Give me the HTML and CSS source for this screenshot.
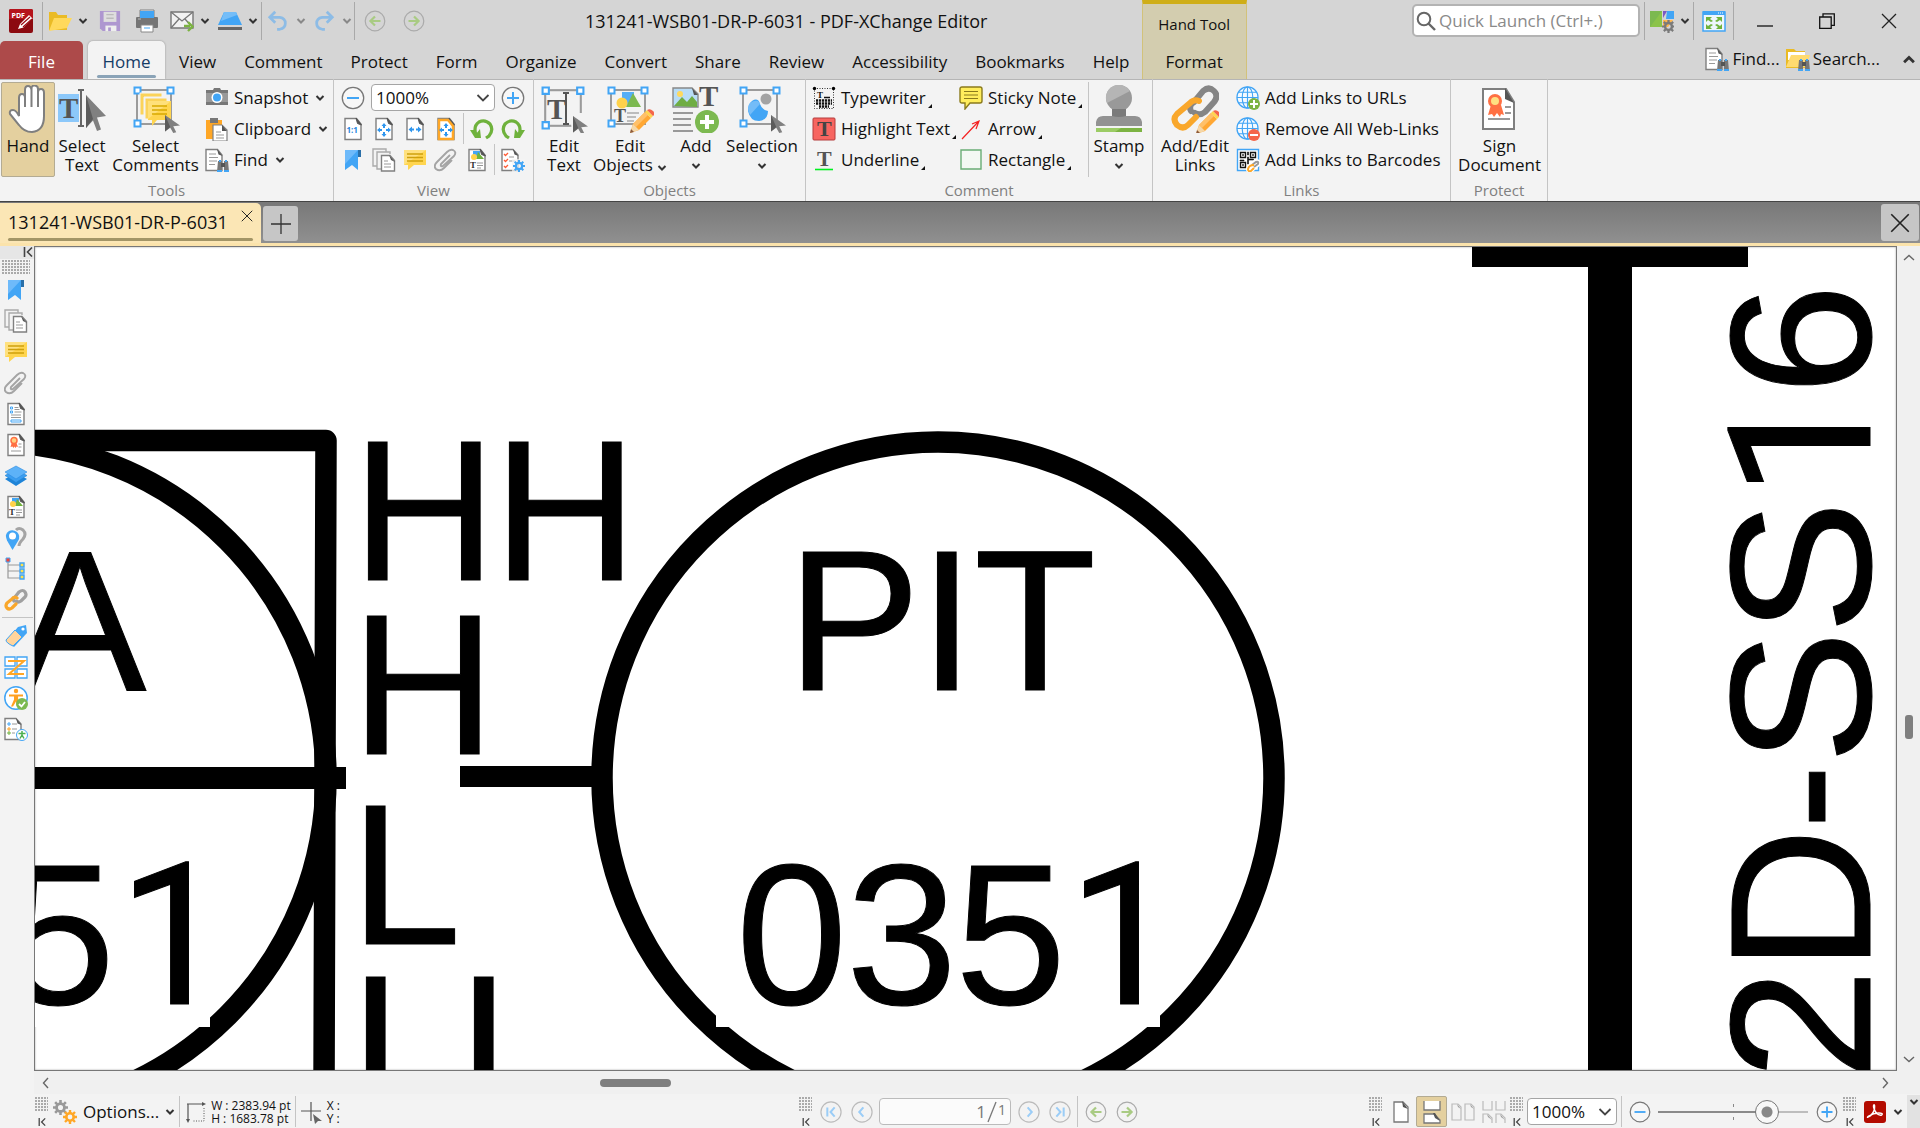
FILE: index.html
```html
<!DOCTYPE html>
<html lang="en">
<head>
<meta charset="utf-8">
<title>131241-WSB01-DR-P-6031 - PDF-XChange Editor</title>
<link rel="stylesheet" href="styles.css">
</head>
<body>
<svg class="sprite" aria-hidden="true">
  <symbol id="chev" viewBox="0 0 10 6"><path d="M1.5 1l3.5 3.5L8.5 1" fill="none" stroke="currentColor" stroke-width="2"/></symbol>
  <symbol id="chev-lg" viewBox="0 0 14 8"><path d="M1.500 1l5.500 5.500L12.500 1" fill="none" stroke="currentColor" stroke-width="1.800"/></symbol>
  <symbol id="caret" viewBox="0 0 14 14"><path d="M9 2L4.500 7 9 12" fill="none" stroke="#666" stroke-width="1.400"/></symbol>
  <symbol id="collapse" viewBox="0 0 10 10"><path d="M1.500 0v10M9 .5L4.500 5 9 9.500" fill="none" stroke="#444" stroke-width="1.600"/></symbol>
  <symbol id="corner" viewBox="0 0 4 4"><path d="M4 0v4H0z" fill="#111"/></symbol>

  <symbol id="app" viewBox="0 0 24 24"><rect width="24" height="24" rx="2" fill="#8c0a10"/><path d="M2 0h20q2 0 2 2v8H0V2q0-2 2-2z" fill="#b5131b"/><path d="M9 20l2-5 9-9 3.500 3.500-9 9z" fill="#fff"/><path d="M12 16l9-8M14 18l9-8" stroke="#9a0d14" stroke-width="1.200"/><text x="2.500" y="8.500" class="tiny-bold" fill="#fff">PDF</text></symbol>
  <symbol id="folder" viewBox="0 0 24 24"><path d="M1 3h7l2 3h9v15H1z" fill="#eabb25"/><path d="M6 9h18l-5 10-18 3z" fill="#ffd95c"/></symbol>
  <symbol id="save" viewBox="0 0 24 24"><path d="M1 1h22v22H4l-3-3z" fill="#ae97d0"/><path d="M5 2h14v11H5z" fill="#dedede"/><path d="M8 5h8M8 9h8" stroke="#bbb" stroke-width="1.500"/><path d="M7 17h12v6H7z" fill="#eee"/><path d="M10 19h3v4h-3z" fill="#ae97d0"/></symbol>
  <symbol id="print" viewBox="0 0 24 24"><path d="M5 1h14v8H5z" fill="#dcebf8" stroke="#808080"/><rect x="1" y="8" width="22" height="11" rx="1" fill="#757575"/><path d="M5 2h14v7H5z" fill="#42a5f5"/><path d="M3 10h3" stroke="#bbb"/><path d="M6 16h12v7H6z" fill="#fff" stroke="#888"/><path d="M9 19h6" stroke="#42a5f5"/></symbol>
  <symbol id="mail" viewBox="0 0 24 24"><path d="M1 3h22v16H1z" fill="#f2f2f2" stroke="#777" stroke-width="1.400"/><path d="M1 3l11 9L23 3M1 19l8-9M23 19l-8-9" fill="none" stroke="#777" stroke-width="1.300"/><path d="M14 17h6M18 13l4.500 4.500L18 22" fill="none" stroke="#7cb342" stroke-width="2.400"/></symbol>
  <symbol id="scan" viewBox="0 0 24 24"><path d="M6 3h12l6 13H0z" fill="#42a5f5"/><path d="M6 3h12l1 3L3 12z" fill="#74bdf8"/><path d="M0 18h24v3H0z" fill="#666"/></symbol>
  <symbol id="undo" viewBox="0 0 24 24"><path d="M4 8h10q6 1 6 6.500t-6 6.500h-3" fill="none" stroke="#8dbce6" stroke-width="3"/><path d="M9 2L3 8l6 6" fill="none" stroke="#8dbce6" stroke-width="3"/></symbol>
  <symbol id="redo" viewBox="0 0 24 24"><path d="M20 8H10q-6 1-6 6.500T10 21h3" fill="none" stroke="#8dbce6" stroke-width="3"/><path d="M15 2l6 6-6 6" fill="none" stroke="#8dbce6" stroke-width="3"/></symbol>
  <symbol id="back" viewBox="0 0 24 24"><circle cx="12" cy="12" r="10.700" fill="none" stroke="#aaa" stroke-width="1.300"/><path d="M18 12H7M12 7l-5 5 5 5" fill="none" stroke="#a9cb83" stroke-width="2.400"/></symbol>
  <symbol id="fwd" viewBox="0 0 24 24"><circle cx="12" cy="12" r="10.700" fill="none" stroke="#aaa" stroke-width="1.300"/><path d="M6 12h11M12 7l5 5-5 5" fill="none" stroke="#a9cb83" stroke-width="2.400"/></symbol>
  <symbol id="mag" viewBox="0 0 20 20"><circle cx="8" cy="8" r="6.300" fill="none" stroke="#666" stroke-width="2"/><path d="M12.500 12.500L19 19" stroke="#666" stroke-width="2.400"/></symbol>
  <symbol id="ui" viewBox="0 0 24 24"><path d="M0 2h12v16H0z" fill="#7cb950"/><path d="M0 18L12 2v16z" fill="#8bc34a"/><path d="M13 2h4l-4 7z" fill="#7e57c2"/><path d="M17 2h7v8h-8z" fill="#42a5f5"/><path d="M13 11h10l-5 7h-5z" fill="#ffb74d"/><use href="#gear" x="12" y="11" width="13" height="13" color="#7a7a7a"/></symbol>
  <symbol id="full" viewBox="0 0 24 24"><path d="M1 3h22v19H1z" fill="#eef6fd" stroke="#42a5f5" stroke-width="1.500"/><path d="M1 2h22v4H1z" fill="#42a5f5"/><path d="M16 4h6" stroke="#fff" stroke-dasharray="1 1"/><path d="M4 8h6l-2 2 3 2-2 1-3-2-2 2zM20 8h-6l2 2-3 2 2 1 3-2 2 2zM4 20h6l-2-2 3-2-2-1-3 2-2-2zM20 20h-6l2-2-3-2 2-1 3 2 2-2z" fill="#6fb23c"/></symbol>
  <symbol id="min" viewBox="0 0 16 16"><path d="M0 13h16" stroke="#111" stroke-width="1.300"/></symbol>
  <symbol id="restore" viewBox="0 0 16 16"><path d="M.7 4h11.500v11.300H.7zM4 4V.8h11.300v11.500h-3" fill="none" stroke="#111" stroke-width="1.300"/></symbol>
  <symbol id="close" viewBox="0 0 16 16"><path d="M1 1l14 14M15 1L1 15" stroke="#222" stroke-width="1.300"/></symbol>
  <symbol id="plus" viewBox="0 0 20 20"><path d="M10 0v20M0 10h20" stroke="#333" stroke-width="1.300"/></symbol>

  <symbol id="bino" viewBox="0 0 12 12"><path d="M1 1h4v2h2V1h4l1 11H7V7H5v5H0z" fill="#777"/><path d="M0 10h5v2H0zM7 10h5v2H7zM2 0h2v2H2zM8 0h2v2H8z" fill="#42a5f5"/><path d="M4 3h4v4H4z" fill="#555"/></symbol>
  <symbol id="doc" viewBox="0 0 24 24"><path d="M4 1.500h11.500L20 7v15.500H4z" fill="#fff" stroke="#7f7f7f" stroke-width="1.400"/><path d="M15 1l5.500 7-4-1.500z" fill="#555" stroke="#555"/></symbol>
  <symbol id="finddoc" viewBox="0 0 24 24"><path d="M1 1.500h11.500L17 7v15.500H1z" fill="#fff" stroke="#7f7f7f" stroke-width="1.400"/><path d="M12 1l5.500 7-4-1.500z" fill="#555"/><path d="M4 6h7M4 9.500h9M4 13h8M4 16.500h6" stroke="#999" stroke-width="1.200"/><use href="#bino" x="12" y="12" width="12" height="12"/></symbol>
  <symbol id="findfolder" viewBox="0 0 24 24"><path d="M0 2h8l2 2h9v17H0z" fill="#eabb25"/><path d="M2 5h17v8H2z" fill="#fff"/><path d="M5 8h19l-4 12H0z" fill="#ffdb70"/><use href="#bino" x="12" y="12" width="12" height="12"/></symbol>

  <symbol id="cursor" viewBox="0 0 20 24" preserveAspectRatio="none"><path d="M0 0l20 14-9 1 4 8-4 1-4-7-7 5z" fill="#808080"/><path d="M0 0l7 16-7 6z" fill="#5c5c5c"/></symbol>
  <symbol id="frame" viewBox="0 0 42 42"><rect x="4" y="4" width="34" height="34" fill="none" stroke="#9b9b9b" stroke-width="2"/><path d="M1.500 1.500h6v6h-6zM34.500 1.500h6v6h-6zM1.500 34.500h6v6h-6z" fill="#fff" stroke="#42a5f5" stroke-width="2"/></symbol>
  <symbol id="pencil" viewBox="0 0 24 24"><path d="M0 24l3-9L15 3l6 6L9 21z" fill="#ffa733"/><path d="M3 15l12-12 3 3L6 18z" fill="#ffc069"/><path d="M0 24l3-9 6 6z" fill="#f5d7a8"/><path d="M15 3l2-2 6 6-2 2z" fill="#ffd54f"/><path d="M17 1q3-2 6 1t0 5z" fill="#f4664a"/><path d="M0 24l1-4 3 3z" fill="#8b5a3c"/></symbol>

  <symbol id="hand" viewBox="0 0 48 48"><g transform="translate(5 0)"><path d="M10 27V13q0-4 3-4t3 4V5q0-4 3-4t3.500 4V4q0-4 3.500-3.500T29 5v2q0-3 3-3t3 4v23q0 15-12 16Q15 47 10 40L1 29q-1-4 3-4 3 0 6 6z" fill="#fff" stroke="#7f7f7f" stroke-width="2"/><path d="M16 12v10M22.500 5v17M29 7v15" stroke="#7f7f7f" stroke-width="2"/></g></symbol>
  <symbol id="seltext" viewBox="0 0 48 48"><rect y="9" width="21" height="28" fill="#8cc8fa"/><text x="1" y="33" class="serif-lg" fill="#555">T</text><path d="M20 5h6M20 41h6M23 5v36" stroke="#666" stroke-width="2"/><use href="#cursor" x="28" y="10" width="20" height="36"/></symbol>
  <symbol id="selcom" viewBox="0 0 48 48"><use href="#frame" x="1" y="1" width="42" height="42"/><path d="M8 30V8h22v4H12v18zM13 34V13h22v4H17v17z" fill="#fbd35a" stroke="#f3f3f3"/><path d="M16 16h23v19H25l-5 6v-6h-4z" fill="#ffd54f"/><path d="M16 34l23-18H16z" fill="#ffe07a"/><path d="M20 21h15M20 25h15M20 29h15" stroke="#d9a900" stroke-width="1.400"/><use href="#cursor" x="33" y="30" width="15" height="18"/></symbol>
  <symbol id="edittext" viewBox="0 0 48 48"><use href="#frame" x="1" y="1" width="44" height="44"/><text x="7" y="34" class="serif-lg" fill="#555">T</text><path d="M23 8h6M23 39h6M26 8v31" stroke="#555" stroke-width="2"/><path d="M30 28h18v20H32z" fill="#f3f3f3"/><use href="#cursor" x="33" y="31" width="15" height="18"/></symbol>
  <symbol id="editobj" viewBox="0 0 48 48"><use href="#frame" x="1" y="1" width="42" height="42"/><path d="M16 7h12v14H16z" fill="#55aef6"/><path d="M27 8l8 14H20z" fill="#7cb950"/><circle cx="16" cy="18" r="5.500" fill="#ffd24a"/><text x="8" y="37" class="serif-md" fill="#555">T</text><path d="M21 28h12M21 32h9M21 36h7" stroke="#aaa" stroke-width="1.600"/><use href="#pencil" x="24" y="24" width="24" height="24"/></symbol>
  <symbol id="addobj" viewBox="0 0 48 48"><path d="M1 3h19l6 6v13H1z" fill="#b8dcf6" stroke="#888" stroke-width="1.400"/><path d="M2 21l8-9 5 5 5-6 5 6v5z" fill="#6fad43"/><circle cx="8" cy="9" r="3" fill="#ffd95c"/><path d="M20 3l6 7h-4z" fill="#555"/><text x="27" y="21" class="serif-lg" fill="#555">T</text><path d="M1 28h20M1 34h18M1 40h18M1 46h20" stroke="#999" stroke-width="2"/><circle cx="35" cy="37" r="12" fill="#7cb950"/><path d="M35 30v14M28 37h14" stroke="#fff" stroke-width="4"/></symbol>
  <symbol id="selobj" viewBox="0 0 48 48"><use href="#frame" x="1" y="1" width="42" height="42"/><circle cx="28" cy="14" r="5.500" fill="#a3a3a3"/><path d="M14 16q6-4 8 3 2 6 8 7 0 9-9 10-9 0-11-10 0-7 4-10z" fill="#42a5f5"/><path d="M12 18q8-5 10 1l-10 11q-4-8 0-12z" fill="#73bcf8"/><use href="#cursor" x="33" y="30" width="15" height="18"/></symbol>
  <symbol id="stamp" viewBox="0 0 48 48"><circle cx="24" cy="13" r="13" fill="#999"/><path d="M12 18A13 13 0 0 1 35 6z" fill="#b5b5b5"/><path d="M17 24h14v8H17z" fill="#7a7a7a"/><path d="M1 41v-4q1-6 7-6h9q7 2 14 0h9q6 0 7 6v4z" fill="#929292"/><path d="M1 43h46v4H1z" fill="#7cb342"/><path d="M1 43h25l-6 4H1z" fill="#9ccc65"/></symbol>
  <symbol id="addlink" viewBox="0 0 48 48"><g fill="none" stroke-width="6" stroke-linecap="round"><path d="M20 26q-3-6 3-9l9-11q6-5 11 0 5 5 0 11l-9 10q-5 4-10 1" stroke="#858585"/><path d="M28 16q-5-2-9 2L6 29q-5 5 0 11 6 5 11 0l8-8" stroke="#f9a72b"/></g><use href="#pencil" x="25" y="25" width="24" height="24"/></symbol>
  <symbol id="sign" viewBox="0 0 48 48"><path d="M7 4h23l8 13v27H7z" fill="#fff" stroke="#7f7f7f" stroke-width="2"/><path d="M29 3l9 15-9-4z" fill="#555"/><path d="M15 20l-3 10 4-1 2 3 3-4 3 4 1-3 3 1-3-10z" fill="#ff7043"/><circle cx="19" cy="16" r="7" fill="#ff7043"/><circle cx="19" cy="16" r="4" fill="#ffe082"/><path d="M29 22h6M29 28h6M12 34h22" stroke="#999" stroke-width="2"/></symbol>

  <symbol id="camera" viewBox="0 0 24 24"><path d="M1 4h7l1-2h6l1 2h7v15H1z" fill="#777"/><path d="M1 7h22v9H1z" fill="#999"/><circle cx="12" cy="11.500" r="5.500" fill="#fff"/><circle cx="12" cy="11.500" r="4" fill="#42a5f5"/></symbol>
  <symbol id="clip" viewBox="0 0 24 24"><path d="M1 3h16v19H1z" fill="#ffa726"/><path d="M5 1h8v5H5z" fill="#777"/><path d="M8 8h9l5 5v11H8z" fill="#fff" stroke="#808080" stroke-width="1.200"/><path d="M17 8l5 6h-5z" fill="#555"/><path d="M11 15h5M11 18h8M11 21h8" stroke="#999"/></symbol>
  <symbol id="zminus" viewBox="0 0 24 24"><circle cx="12" cy="12" r="10.700" fill="#f7f7f7" stroke="#777" stroke-width="1.300"/><path d="M6 12h12" stroke="#42a5f5" stroke-width="2"/></symbol>
  <symbol id="zplus" viewBox="0 0 24 24"><circle cx="12" cy="12" r="10.700" fill="#f7f7f7" stroke="#777" stroke-width="1.300"/><path d="M6 12h12M12 6v12" stroke="#42a5f5" stroke-width="2"/></symbol>
  <symbol id="one" viewBox="0 0 24 24"><use href="#doc" width="24" height="24"/><text x="5.500" y="16" class="tiny" fill="#1f86e0">1:1</text></symbol>
  <symbol id="arrows4" viewBox="0 0 14 14"><path d="M7 0l2.500 3H8v2H6V3H4.500zM7 14l-2.500-3H6V9h2v2h1.500zM0 7l3-2.500V6h2v2H3v1.500zM14 7l-3 2.500V8H9V6h2V4.500z" fill="#2f96ee"/></symbol>
  <symbol id="fitpage" viewBox="0 0 24 24"><use href="#doc" width="24" height="24"/><use href="#arrows4" x="5" y="6" width="14" height="14"/></symbol>
  <symbol id="fitwidth" viewBox="0 0 24 24"><use href="#doc" width="24" height="24"/><path d="M5.500 12.500l3.500-3v2h2v2H9v2zM18.500 12.500l-3.500-3v2h-2v2h2v2z" fill="#2f96ee"/></symbol>
  <symbol id="fitvis" viewBox="0 0 24 24"><use href="#doc" width="24" height="24"/><path d="M5 3h9l5 6v13H5z" fill="none" stroke="#ffa726" stroke-width="2.500"/><use href="#arrows4" x="5" y="6" width="14" height="14"/></symbol>
  <symbol id="rotl" viewBox="0 0 24 24"><path d="M6 18Q3 9 9 5q6-3 11 2 4 6-1 12l-3 2" fill="none" stroke="#6fb23c" stroke-width="3.200"/><path d="M0 13h4l2 4 4-5 1 9H5z" fill="#6fb23c"/></symbol>
  <symbol id="rotr" viewBox="0 0 24 24"><path d="M18 18q3-9-3-13-6-3-11 2-4 6 1 12l3 2" fill="none" stroke="#6fb23c" stroke-width="3.200"/><path d="M24 13h-4l-2 4-4-5-1 9h6z" fill="#6fb23c"/></symbol>
  <symbol id="bookmark" viewBox="0 0 24 24"><path d="M16 2h4v7h-4z" fill="#2a6fa8"/><path d="M4 2h13v20l-6-5-7 5z" fill="#42a5f5"/><path d="M4 2h13L4 16z" fill="#6ebafa"/></symbol>
  <symbol id="pages" viewBox="0 0 24 24"><path d="M14 4V1H1v17h4M18 6V4H5v17h5" fill="none" stroke="#aaa" stroke-width="1.400"/><path d="M9.500 7.500H18l4.500 5v10.500h-13z" fill="#fff" stroke="#808080" stroke-width="1.400"/><path d="M17 7l6 7-4-2z" fill="#555"/><path d="M12 13h4M12 16h7M12 19h7" stroke="#999" stroke-width="1.200"/></symbol>
  <symbol id="comment" viewBox="0 0 24 24"><path d="M1 2h22v15H11l-6 5v-5H1z" fill="#ffd54f"/><path d="M1 17V2h22z" fill="#ffe17f"/><path d="M4 6h16M4 9.500h16M4 13h16" stroke="#cfa10c" stroke-width="1.300"/></symbol>
  <symbol id="paperclip" viewBox="0 0 24 24"><path d="M16 7L7 16q-1 3 2 2L20 8q3-4-1-6-3-1-6 2L3 14q-4 4-1 7 4 3 8-1l8-8" fill="none" stroke="#a4a4a4" stroke-width="1.900"/></symbol>
  <symbol id="content" viewBox="0 0 24 24"><use href="#doc" width="24" height="24"/><path d="M8 3h7v6H8z" fill="#42a5f5"/><path d="M13 4l6 7h-8z" fill="#6fb23c"/><circle cx="9" cy="9" r="3" fill="#ffd24a"/><text x="5" y="20" class="serif-sm" fill="#333">T</text><path d="M12 15h6M12 17.500h6M12 20h4" stroke="#999" stroke-width="1.200"/></symbol>
  <symbol id="gear" viewBox="0 0 14 14"><path d="M7 0v3M7 11v3M0 7h3M11 7h3M2 2l2 2M10 10l2 2M12 2l-2 2M4 10l-2 2" stroke="currentColor" stroke-width="2.400"/><circle cx="7" cy="7" r="3.700" fill="none" stroke="currentColor" stroke-width="2.600"/></symbol>
  <symbol id="props" viewBox="0 0 24 24"><path d="M1 1.500h11L17 7v15.500H1z" fill="#fff" stroke="#7f7f7f" stroke-width="1.400"/><path d="M12 1l5.500 7-4-1.500z" fill="#555"/><path d="M3 6l1.500 1.500L7 5M3 12l1.500 1.500L7 11M3 18l1.500 1.500L7 17" fill="none" stroke="#ff5c36" stroke-width="1.300"/><path d="M8 9h5M8 13h6" stroke="#999"/><path d="M11 11h13v13H11z" fill="#f3f3f3" opacity=".7"/><use href="#gear" x="12" y="12" width="12" height="12" color="#42a5f5"/></symbol>
  <symbol id="typewriter" viewBox="0 0 24 24"><path d="M2.500 2.500h19v20h-19z" fill="none" stroke="#333" stroke-dasharray="1 1.500"/><circle cx="2.500" cy="2.500" r="1.700"/><circle cx="21.500" cy="2.500" r="1.700"/><text x="5" y="12" class="serif-sm" fill="#111">T</text><path d="M12 11.500h6" stroke="#111" stroke-width="1.500"/><path d="M4 14.500h16M4 17.500h16M7 20.500h10" stroke="#111" stroke-width="2.400" stroke-dasharray="2.200 .8"/></symbol>
  <symbol id="hltext" viewBox="0 0 24 24"><rect x="1" y="1" width="22" height="22" rx="1" fill="#f76560" stroke="#b43c3c"/><text x="5" y="19" class="serif-t" fill="#444">T</text></symbol>
  <symbol id="underline" viewBox="0 0 24 24"><text x="5" y="18" class="serif-t" fill="#555">T</text><path d="M3 21.500h18" stroke="#00f020" stroke-width="1.600"/></symbol>
  <symbol id="sticky" viewBox="0 0 24 24"><path d="M3 1h18q2 0 2 2v12q0 2-2 2H11l-5 6v-6H3q-2 0-2-2V3q0-2 2-2z" fill="#ffed5c" stroke="#8a7a1c" stroke-width="1.400"/><path d="M5 5.500h14M5 9h14M5 12.500h14" stroke="#8a7a1c"/></symbol>
  <symbol id="arrow" viewBox="0 0 24 24"><path d="M3 22L20 4M13 7l7-3-3 8" fill="none" stroke="#f42222" stroke-width="1.200"/></symbol>
  <symbol id="rect" viewBox="0 0 24 24"><path d="M2 2h20v19H2z" fill="#f3f8f3" stroke="#69ad75" stroke-width="1.400"/></symbol>
  <symbol id="globe" viewBox="0 0 24 24"><circle cx="12" cy="12" r="11" fill="#f5faff" stroke="#42a5f5" stroke-width="1.300"/><path d="M12 1v22M1 12h22M3 6.500h18M3 17.500h18" stroke="#42a5f5" stroke-width="1.200"/><ellipse cx="12" cy="12" rx="5.500" ry="11" fill="none" stroke="#42a5f5" stroke-width="1.200"/></symbol>
  <symbol id="urladd" viewBox="0 0 24 24"><use href="#globe" width="23" height="23"/><circle cx="18" cy="18" r="6" fill="#7cb342"/><path d="M18 14v8M14 18h8" stroke="#fff" stroke-width="2"/></symbol>
  <symbol id="urldel" viewBox="0 0 24 24"><use href="#globe" width="23" height="23"/><circle cx="18" cy="18" r="6" fill="#f4664a"/><path d="M14 18h8" stroke="#fff" stroke-width="2"/></symbol>
  <symbol id="qr" viewBox="0 0 24 24"><path d="M1.500 1.500h21v21h-21z" fill="#fff" stroke="#42a5f5" stroke-width="1.400"/><path d="M4.500 4.500h5v5h-5zM14.500 4.500h5v5h-5zM4.500 14.500h5v5h-5z" fill="none" stroke="#111" stroke-width="1.400"/><path d="M6.500 6.500h1v1h-1zM16.500 6.500h1v1h-1zM6.500 16.500h1v1h-1zM11.500 4h1v3h-1zM11.500 9h1v2h5v1h-5v4h-1zM4 12h4v1H4z" fill="#111" stroke="#111" stroke-width=".6"/><path d="M18 19l4-3q1-3-2-2l-4 3" fill="none" stroke="#fff" stroke-width="5"/><path d="M18 17q-5 0-6 4 0 3 3 2l3-3" fill="none" stroke="#fff" stroke-width="4"/><path d="M18 19l4-3q1-3-2-2l-4 3" fill="none" stroke="#999" stroke-width="2"/><path d="M18 17q-5 0-6 4 0 3 3 2l3-3" fill="none" stroke="#ffa726" stroke-width="2"/></symbol>

  <symbol id="fields" viewBox="0 0 24 24"><use href="#doc" width="24" height="24"/><path d="M6.500 5h2v2h-2zM6.500 9h2v2h-2zM7 18h10v2H7z" fill="none" stroke="#42a5f5"/><path d="M10.500 5.500h4M10.500 7.500h5M10.500 10h7M7 13h10M7 15.500h10" stroke="#999"/></symbol>
  <symbol id="sigs" viewBox="0 0 24 24"><use href="#doc" width="24" height="24"/><path d="M8 9l-1.500 5 2-.5 1 1.500 1-1.500 1 1.500 1-1.500 1.500.5L12 9z" fill="#ff7043"/><circle cx="10" cy="7.500" r="3" fill="#ffd180" stroke="#ff7043" stroke-width="1.500"/><path d="M14.500 11h3M14.500 14h3M7 18h10" stroke="#999"/></symbol>
  <symbol id="layers" viewBox="0 0 24 24"><path d="M1 15l11-6 11 6-11 7z" fill="#1e84d8"/><path d="M1 11.500l11-6 11 6-11 7z" fill="#3a9df0" stroke="#2583cf" stroke-width=".6"/><path d="M1 8l11-6 11 6-11 7z" fill="#5db2f8" stroke="#2b8be0" stroke-width=".6"/></symbol>
  <symbol id="dest" viewBox="0 0 24 24"><path d="M15 20q0-3 4-7 4-5 0-9-4-3-7 0" fill="none" stroke="#a4a4a4" stroke-width="3"/><path d="M8.500 24L3 14.500Q0 8 5 5q4-2 8 1 4 4 1 9z" fill="#42a5f5"/><circle cx="8.500" cy="10" r="3.500" fill="#fff"/></symbol>
  <symbol id="tree" viewBox="0 0 24 24"><path d="M4 4v17h14M4 8h14M4 14h14" fill="none" stroke="#999" stroke-width="1.200"/><path d="M2 1h4v4H2z" fill="#f44336" stroke="#42a5f5"/><path d="M16 6h4v4h-4zM16 12h4v4h-4zM16 18h4v4h-4z" fill="#ffe14a" stroke="#42a5f5" stroke-width="1.400"/></symbol>
  <symbol id="links" viewBox="0 0 24 24"><g fill="none" stroke-width="3.200" stroke-linecap="round"><path d="M10 13q-2-3 1-4l4-5q4-3 6 0t0 5l-4 4q-3 2-5 0" stroke="#a0a0a0"/><path d="M13 10q-3-2-5 1l-5 4q-2 3 0 5t5 0l4-4" stroke="#f9a72b"/></g></symbol>
  <symbol id="tag" viewBox="0 0 24 24"><path d="M2 17L14 3l8-2 1 8L10 23z" fill="#42a5f5"/><path d="M2 16L11 6l7 7-9 9q-7-3-7-6z" fill="#ffd49c" stroke="#42a5f5"/><circle cx="19" cy="5" r="1.600" fill="#fff"/></symbol>
  <symbol id="order" viewBox="0 0 24 24"><path d="M1 2h10v9H1zM13 2h10v9H13zM1 14h10v9H1zM13 14h10v9H13z" fill="#fff" stroke="#42a5f5" stroke-width="1.300"/><path d="M4 6h16L5 19h15" fill="none" stroke="#ffa726" stroke-width="2"/></symbol>
  <symbol id="access" viewBox="0 0 24 24"><circle cx="12" cy="12" r="11.200" fill="#fff" stroke="#42a5f5" stroke-width="1.500"/><circle cx="12" cy="5" r="2.200" fill="#ffa020"/><path d="M5 8.500h14v2h-5l1 10h-2l-1-5-3 5H7l3-7v-3H5z" fill="#ffa020"/><circle cx="18" cy="18" r="6" fill="#7cb950"/><path d="M15 18l2.500 2.500L21 16" fill="none" stroke="#fff" stroke-width="1.800"/></symbol>
  <symbol id="report" viewBox="0 0 24 24"><path d="M1 1.500h11L17 7v15.500H1z" fill="#fff" stroke="#7f7f7f" stroke-width="1.400"/><path d="M12 1l5.500 7-4-1.500z" fill="#555"/><path d="M4 6h2v2H4z" fill="none" stroke="#42a5f5"/><path d="M4 11h2v2H4z" fill="none" stroke="#ffa020"/><path d="M4 15h2v2H4z" fill="none" stroke="#6fb23c"/><path d="M8 7h5M8 12h5M8 16h3" stroke="#999"/><circle cx="18" cy="18" r="5.500" fill="#fff" stroke="#42a5f5"/><path d="M14.500 16.500h7M18 14v4M18 18l-2 3.500M18 18l2 3.500" stroke="#4caf50" stroke-width="1.500"/></symbol>

  <symbol id="first" viewBox="0 0 24 24"><circle cx="12" cy="12" r="11" fill="none" stroke="#bbb" stroke-width="1.300"/><path d="M8 7v10M16 7l-4.500 5 4.500 5" fill="none" stroke="#9bcdf7" stroke-width="2.200"/></symbol>
  <symbol id="prev" viewBox="0 0 24 24"><circle cx="12" cy="12" r="11" fill="none" stroke="#bbb" stroke-width="1.300"/><path d="M13.500 7L9 12l4.500 5" fill="none" stroke="#9bcdf7" stroke-width="2.200"/></symbol>
  <symbol id="next" viewBox="0 0 24 24"><circle cx="12" cy="12" r="11" fill="none" stroke="#bbb" stroke-width="1.300"/><path d="M10.500 7l4.500 5-4.500 5" fill="none" stroke="#9bcdf7" stroke-width="2.200"/></symbol>
  <symbol id="last" viewBox="0 0 24 24"><circle cx="12" cy="12" r="11" fill="none" stroke="#bbb" stroke-width="1.300"/><path d="M16 7v10M8 7l4.500 5L8 17" fill="none" stroke="#9bcdf7" stroke-width="2.200"/></symbol>
  <symbol id="gears" viewBox="0 0 24 24"><use href="#gear" x="0" y="0" width="15" height="15" color="#999"/><use href="#gear" x="10" y="10" width="14" height="14" color="#ffa726"/></symbol>
  <symbol id="size" viewBox="0 0 24 24"><path d="M3 4h16M4 4v17" stroke="#555" stroke-width="1.200"/><path d="M18 2l4 2-4 2zM2 19h4l-2 4z" fill="#555"/><path d="M20 8v13H8" fill="none" stroke="#555" stroke-dasharray="1 1.500"/></symbol>
  <symbol id="cross" viewBox="0 0 24 24"><path d="M11 2v19M1 11h20" stroke="#555" stroke-width="1.200"/><path d="M13 14l9 7h-4l-3 3z" fill="#666"/></symbol>
  <symbol id="single" viewBox="0 0 24 24"><path d="M5 2h9l5 5v15H5z" fill="#fff" stroke="#777" stroke-width="1.300"/><path d="M13 1l6 8-5-2z" fill="#555"/></symbol>
  <symbol id="cont" viewBox="0 0 24 24"><path d="M4 1v9h16V1M4 23v-9h10l6 6v3z" fill="#fff" stroke="#777" stroke-width="1.300"/><path d="M13 13h2l5 8-5-3z" fill="#555"/></symbol>
  <symbol id="two" viewBox="0 0 24 24"><path d="M1 4h6l3 3v13H1zM14 4h6l3 3v13h-9z" fill="none" stroke="#bbb" stroke-width="1.200"/><path d="M6 4l4 5-3-2zM19 4l4 5-3-2z" fill="#999"/></symbol>
  <symbol id="four" viewBox="0 0 24 24"><path d="M1 1v9h9V1M14 1v9h9V1M1 23v-9h5l4 4v5M14 23v-9h5l4 4v5" fill="none" stroke="#bbb" stroke-width="1.200"/><path d="M5 14l5 6-4-3zM18 14l5 6-4-3z" fill="#999"/></symbol>
  <symbol id="pdf" viewBox="0 0 24 24"><rect x="1" y="1" width="22" height="22" rx="3" fill="#b30b00"/><path d="M5 17q5-2 6.500-8 .5-5-.8-4-1 2 2 7 3 4 6 3 2-2-3-2-5 0-10 3-2 2-.7 1z" fill="none" stroke="#fff" stroke-width="1.400"/></symbol>
</svg>

<div class="app">
  <header class="head">
    <div class="quickbar">
      <span class="logo"><svg class="i24"><use href="#app"/></svg></span>
      <i class="sep"></i>
      <button class="split" aria-label="Open"><svg class="i24"><use href="#folder"/></svg><svg class="chev"><use href="#chev"/></svg></button>
      <button class="tool" aria-label="Save"><svg class="i22"><use href="#save"/></svg></button>
      <button class="tool" aria-label="Print"><svg class="i24"><use href="#print"/></svg></button>
      <button class="split" aria-label="E-mail"><svg class="i24"><use href="#mail"/></svg><svg class="chev"><use href="#chev"/></svg></button>
      <button class="split" aria-label="Scan"><svg class="i24"><use href="#scan"/></svg><svg class="chev"><use href="#chev"/></svg></button>
      <i class="sep"></i>
      <button class="split dim" aria-label="Undo"><svg class="i22"><use href="#undo"/></svg><svg class="chev"><use href="#chev"/></svg></button>
      <button class="split dim" aria-label="Redo"><svg class="i22"><use href="#redo"/></svg><svg class="chev"><use href="#chev"/></svg></button>
      <i class="sep"></i>
      <button class="tool wide" aria-label="Previous view"><svg class="i22"><use href="#back"/></svg></button>
      <button class="tool wide" aria-label="Next view"><svg class="i22"><use href="#fwd"/></svg></button>
      <h1 class="title">131241-WSB01-DR-P-6031 - PDF-XChange Editor</h1>
    </div>
    <div class="ctx-head">Hand Tool</div>
    <div class="winbar">
      <label class="search"><svg class="i20"><use href="#mag"/></svg><input type="search" aria-label="Quick Launch" placeholder="Quick Launch (Ctrl+.)"></label>
      <i class="sep"></i>
      <button class="split" aria-label="UI options"><svg class="i24"><use href="#ui"/></svg><svg class="chev"><use href="#chev"/></svg></button>
      <i class="sep"></i>
      <button class="tool wide" aria-label="Full screen"><svg class="i24"><use href="#full"/></svg></button>
      <i class="sep"></i>
      <button class="win" aria-label="Minimize"><svg class="i16"><use href="#min"/></svg></button>
      <button class="win" aria-label="Restore"><svg class="i16"><use href="#restore"/></svg></button>
      <button class="win" aria-label="Close"><svg class="i16"><use href="#close"/></svg></button>
    </div>
    <nav class="tabs">
      <button class="tab file">File</button>
      <button class="tab active">Home</button>
      <button class="tab">View</button>
      <button class="tab">Comment</button>
      <button class="tab">Protect</button>
      <button class="tab">Form</button>
      <button class="tab">Organize</button>
      <button class="tab">Convert</button>
      <button class="tab">Share</button>
      <button class="tab">Review</button>
      <button class="tab">Accessibility</button>
      <button class="tab">Bookmarks</button>
      <button class="tab">Help</button>
    </nav>
    <button class="tab ctx-tab">Format</button>
    <div class="finders">
      <button class="finder"><svg class="i24"><use href="#finddoc"/></svg>Find...</button>
      <button class="finder"><svg class="i24"><use href="#findfolder"/></svg>Search...</button>
      <button class="fold" aria-label="Collapse ribbon"><svg class="chev-fold"><use href="#chev"/></svg></button>
    </div>
  </header>

  <section class="ribbon">
    <div class="group g-tools">
      <div class="body">
        <button class="big on w54"><svg class="i48"><use href="#hand"/></svg><span>Hand</span></button>
        <button class="big w54"><svg class="i48"><use href="#seltext"/></svg><span>Select<br>Text</span></button>
        <button class="big w93"><svg class="i48"><use href="#selcom"/></svg><span>Select<br>Comments</span></button>
        <div class="stack">
          <button class="row"><svg class="i24"><use href="#camera"/></svg>Snapshot<svg class="chev"><use href="#chev"/></svg></button>
          <button class="row"><svg class="i24"><use href="#clip"/></svg>Clipboard<svg class="chev"><use href="#chev"/></svg></button>
          <button class="row"><svg class="i24"><use href="#finddoc"/></svg>Find<svg class="chev"><use href="#chev"/></svg></button>
        </div>
      </div>
      <div class="name">Tools</div>
    </div>
    <div class="group g-view">
      <div class="body">
        <div class="stack">
          <div class="line">
            <button class="ib" aria-label="Zoom out"><svg class="i24"><use href="#zminus"/></svg></button>
            <span class="combo"><select aria-label="Zoom"><option>1000%</option></select><svg class="chev-lg"><use href="#chev-lg"/></svg></span>
            <button class="ib" aria-label="Zoom in"><svg class="i24"><use href="#zplus"/></svg></button>
          </div>
          <div class="line">
            <button class="ib" aria-label="Actual size"><svg class="i24"><use href="#one"/></svg></button>
            <button class="ib" aria-label="Fit page"><svg class="i24"><use href="#fitpage"/></svg></button>
            <button class="ib" aria-label="Fit width"><svg class="i24"><use href="#fitwidth"/></svg></button>
            <button class="ib" aria-label="Fit visible"><svg class="i24"><use href="#fitvis"/></svg></button>
            <i class="vsep"></i>
            <button class="ib" aria-label="Rotate left"><svg class="i24"><use href="#rotl"/></svg></button>
            <button class="ib" aria-label="Rotate right"><svg class="i24"><use href="#rotr"/></svg></button>
          </div>
          <div class="line">
            <button class="ib" aria-label="Bookmarks"><svg class="i24"><use href="#bookmark"/></svg></button>
            <button class="ib" aria-label="Thumbnails"><svg class="i24"><use href="#pages"/></svg></button>
            <button class="ib" aria-label="Comments"><svg class="i24"><use href="#comment"/></svg></button>
            <button class="ib" aria-label="Attachments"><svg class="i24"><use href="#paperclip"/></svg></button>
            <button class="ib" aria-label="Content"><svg class="i24"><use href="#content"/></svg></button>
            <i class="vsep"></i>
            <button class="ib" aria-label="Properties"><svg class="i24"><use href="#props"/></svg></button>
          </div>
        </div>
      </div>
      <div class="name">View</div>
    </div>
    <div class="group g-objects">
      <div class="body">
        <button class="big w56"><svg class="i48"><use href="#edittext"/></svg><span>Edit<br>Text</span></button>
        <button class="big w76"><svg class="i48"><use href="#editobj"/></svg><span>Edit<br>Objects<svg class="chev"><use href="#chev"/></svg></span></button>
        <button class="big w56"><svg class="i48"><use href="#addobj"/></svg><span>Add</span><svg class="chev"><use href="#chev"/></svg></button>
        <button class="big w76"><svg class="i48"><use href="#selobj"/></svg><span>Selection</span><svg class="chev"><use href="#chev"/></svg></button>
      </div>
      <div class="name">Objects</div>
    </div>
    <div class="group g-comment">
      <div class="body">
        <div class="stack col-a">
          <button class="row"><svg class="i24"><use href="#typewriter"/></svg>Typewriter<svg class="corner"><use href="#corner"/></svg></button>
          <button class="row"><svg class="i24"><use href="#hltext"/></svg>Highlight Text<svg class="corner"><use href="#corner"/></svg></button>
          <button class="row"><svg class="i24"><use href="#underline"/></svg>Underline<svg class="corner"><use href="#corner"/></svg></button>
        </div>
        <div class="stack col-b">
          <button class="row"><svg class="i24"><use href="#sticky"/></svg>Sticky Note<svg class="corner"><use href="#corner"/></svg></button>
          <button class="row"><svg class="i24"><use href="#arrow"/></svg>Arrow<svg class="corner"><use href="#corner"/></svg></button>
          <button class="row"><svg class="i24"><use href="#rect"/></svg>Rectangle<svg class="corner"><use href="#corner"/></svg></button>
        </div>
        <i class="vsep"></i>
        <button class="big w60"><svg class="i48"><use href="#stamp"/></svg><span>Stamp</span><svg class="chev"><use href="#chev"/></svg></button>
      </div>
      <div class="name">Comment</div>
    </div>
    <div class="group g-links">
      <div class="body">
        <button class="big w76"><svg class="i48"><use href="#addlink"/></svg><span>Add/Edit<br>Links</span></button>
        <div class="stack">
          <button class="row"><svg class="i24"><use href="#urladd"/></svg>Add Links to URLs</button>
          <button class="row"><svg class="i24"><use href="#urldel"/></svg>Remove All Web-Links</button>
          <button class="row"><svg class="i24"><use href="#qr"/></svg>Add Links to Barcodes</button>
        </div>
      </div>
      <div class="name">Links</div>
    </div>
    <div class="group g-protect">
      <div class="body">
        <button class="big w93"><svg class="i48"><use href="#sign"/></svg><span>Sign<br>Document</span></button>
      </div>
      <div class="name">Protect</div>
    </div>
  </section>

  <div class="doctabs">
    <div class="doctab"><span>131241-WSB01-DR-P-6031</span><button class="x" aria-label="Close document"><svg class="i12"><use href="#close"/></svg></button></div>
    <button class="newtab" aria-label="New tab"><svg class="i20"><use href="#plus"/></svg></button>
    <button class="closeall" aria-label="Close all"><svg class="i20"><use href="#close"/></svg></button>
  </div>

  <main class="work">
    <aside class="side">
      <button class="sidefold" aria-label="Collapse pane"><svg class="i10"><use href="#collapse"/></svg></button>
      <i class="grip"></i>
      <button class="sb" aria-label="Bookmarks"><svg class="i24"><use href="#bookmark"/></svg></button>
      <button class="sb" aria-label="Thumbnails"><svg class="i24"><use href="#pages"/></svg></button>
      <button class="sb" aria-label="Comments"><svg class="i24"><use href="#comment"/></svg></button>
      <button class="sb" aria-label="Attachments"><svg class="i24"><use href="#paperclip"/></svg></button>
      <button class="sb" aria-label="Fields"><svg class="i24"><use href="#fields"/></svg></button>
      <button class="sb" aria-label="Signatures"><svg class="i24"><use href="#sigs"/></svg></button>
      <button class="sb" aria-label="Layers"><svg class="i24"><use href="#layers"/></svg></button>
      <button class="sb" aria-label="Content"><svg class="i24"><use href="#content"/></svg></button>
      <button class="sb" aria-label="Destinations"><svg class="i24"><use href="#dest"/></svg></button>
      <button class="sb" aria-label="3D model tree"><svg class="i24"><use href="#tree"/></svg></button>
      <button class="sb" aria-label="Links"><svg class="i24"><use href="#links"/></svg></button>
      <i class="hsep"></i>
      <button class="sb" aria-label="Tags"><svg class="i24"><use href="#tag"/></svg></button>
      <button class="sb" aria-label="Order"><svg class="i24"><use href="#order"/></svg></button>
      <button class="sb" aria-label="Accessibility check"><svg class="i24"><use href="#access"/></svg></button>
      <button class="sb" aria-label="Accessibility report"><svg class="i24"><use href="#report"/></svg></button>
    </aside>

    <div class="page">
      <svg class="drawing" viewBox="35 247 1862 823" preserveAspectRatio="xMinYMin slice">
        <g fill="none" stroke="#000" stroke-width="21.500">
          <path d="M20 440.500H326L324 1090" stroke-linejoin="round"/>
          <circle cx="-10" cy="778" r="336"/>
          <circle cx="938" cy="778" r="336"/>
        </g>
        <path d="M-40 900h250v127H-40zM716 900h444v127H716z" fill="#fff"/>
        <path d="M20 767h326v22H20zM460 766h140v21H460zM1472 240h276v27h-276zM1588 240h44v850h-44z"/>
        <g class="cad">
          <text x="13" y="690">A</text>
          <text x="4" y="1004">5</text>
          <text x="118" y="1004" class="one">1</text>
          <text x="352 493" y="580">HH</text>
          <text x="351" y="754">H</text>
          <text x="350" y="944">L</text>
          <text x="350 458" y="1115">LL</text>
          <text x="787 919 974" y="690">PIT</text>
          <text x="736 846 955" y="1004">035</text>
          <text x="1068" y="1004" class="one">1</text>
          <g transform="translate(1870 1079) rotate(-90)">
            <text x="-1 107 249 315 445">2D-SS</text>
            <text x="581" class="one">1</text>
            <text x="684">6</text>
          </g>
        </g>
      </svg>
    </div>

    <div class="vscroll">
      <svg class="i14 up"><use href="#caret"/></svg>
      <i class="vthumb"></i>
      <svg class="i14 down"><use href="#caret"/></svg>
    </div>
    <div class="hscroll">
      <svg class="i14"><use href="#caret"/></svg>
      <i class="hthumb"></i>
      <svg class="i14 right"><use href="#caret"/></svg>
    </div>

    <footer class="status">
      <div class="bar lead">
        <span class="handle"><i class="dots"></i><svg class="i8"><use href="#collapse"/></svg></span>
        <button class="opts"><svg class="i24"><use href="#gears"/></svg>Options...<svg class="chev"><use href="#chev"/></svg></button>
        <i class="ssep"></i>
        <svg class="i24 readout"><use href="#size"/></svg>
        <span class="dims">W : 2383.94 pt<br>H : 1683.78 pt</span>
        <i class="ssep"></i>
        <svg class="i24 readout"><use href="#cross"/></svg>
        <span class="dims">X :<br>Y :</span>
      </div>
      <div class="bar">
        <span class="handle"><i class="dots"></i><svg class="i8"><use href="#collapse"/></svg></span>
        <button class="ib" aria-label="First page"><svg class="i22"><use href="#first"/></svg></button>
        <button class="ib" aria-label="Previous page"><svg class="i22"><use href="#prev"/></svg></button>
        <label class="pageno"><input aria-label="Page" value="1"><svg class="slash" viewBox="0 0 10 20"><path d="M1 20L9 0" stroke="#777" stroke-width="1.300"/></svg><span class="total">1</span></label>
        <button class="ib" aria-label="Next page"><svg class="i22"><use href="#next"/></svg></button>
        <button class="ib" aria-label="Last page"><svg class="i22"><use href="#last"/></svg></button>
        <i class="ssep"></i>
        <button class="ib" aria-label="Previous view"><svg class="i22"><use href="#back"/></svg></button>
        <button class="ib" aria-label="Next view"><svg class="i22"><use href="#fwd"/></svg></button>
      </div>
      <div class="bar trail">
        <span class="handle"><i class="dots"></i><svg class="i8"><use href="#collapse"/></svg></span>
        <button class="ib" aria-label="Single page"><svg class="i24"><use href="#single"/></svg></button>
        <button class="ib on" aria-label="Continuous"><svg class="i24"><use href="#cont"/></svg></button>
        <button class="ib" aria-label="Two pages"><svg class="i24"><use href="#two"/></svg></button>
        <button class="ib" aria-label="Two pages continuous"><svg class="i24"><use href="#four"/></svg></button>
        <span class="handle"><i class="dots"></i><svg class="i8"><use href="#collapse"/></svg></span>
        <span class="combo small"><select aria-label="Zoom level"><option>1000%</option></select><svg class="chev-lg"><use href="#chev-lg"/></svg></span>
        <i class="ssep"></i>
        <button class="ib" aria-label="Zoom out"><svg class="i22"><use href="#zminus"/></svg></button>
        <input class="zoom" type="range" aria-label="Zoom slider" min="0" max="100" value="77">
        <button class="ib" aria-label="Zoom in"><svg class="i22"><use href="#zplus"/></svg></button>
        <span class="handle"><i class="dots"></i><svg class="i8"><use href="#collapse"/></svg></span>
        <button class="split pdfbtn" aria-label="Acrobat"><svg class="i24"><use href="#pdf"/></svg><svg class="chev"><use href="#chev"/></svg></button>
        <button class="more" aria-label="More"><svg class="chev"><use href="#chev"/></svg></button>
      </div>
    </footer>
  </main>
</div>
</body>
</html>
```

FILE: styles.css
```css
* { box-sizing: border-box; }

body {
  margin: 0;
  font: 17px/20px "Open Sans", "Noto Sans", sans-serif;
  color: #111;
  background: #f3f3f3;
}

button, input, select {
  margin: 0;
  padding: 0;
  border: 0;
  background: none;
  font: inherit;
  color: inherit;
}

svg { flex: none; display: block; overflow: visible; }
i { display: block; flex: none; }
.sprite { display: none; }

.i8 { width: 8px; height: 10px; }
.i10 { width: 10px; height: 10px; }
.i12 { width: 12px; height: 12px; }
.i14 { width: 14px; height: 14px; }
.i16 { width: 16px; height: 16px; }
.i20 { width: 20px; height: 20px; }
.i22 { width: 22px; height: 22px; }
.i24 { width: 24px; height: 24px; }
.i48 { width: 48px; height: 48px; }
.chev { width: 10px; height: 6px; color: #333; }
.chev-lg { width: 14px; height: 8px; color: #444; }

.tiny { font: bold 8px "Open Sans", sans-serif; }
.tiny-bold { font: bold 7px "Open Sans", sans-serif; }
.serif-sm { font: bold 9px "Liberation Serif", serif; }
.serif-md { font: bold 18px "Liberation Serif", serif; }
.serif-t { font: bold 22px "Liberation Serif", serif; }
.serif-lg { font: bold 29px "Liberation Serif", serif; }

.app {
  display: grid;
  grid-template-rows: auto auto auto 1fr;
  height: 100vh;
  overflow: hidden;
}

/* Title bar and ribbon tabs */
.head {
  display: grid;
  grid-template-columns: auto auto 1fr;
  grid-template-rows: 41px 38px;
  background: #d5d5d5;
}

.quickbar, .winbar { display: flex; align-items: center; }
.logo { padding: 0 9px; }
.sep { width: 1px; height: 38px; background: #a9a9a9; }
.split { display: flex; align-items: center; gap: 6px; padding: 0 3px 0 5px; height: 36px; }
.split.dim { gap: 7px; padding: 0 2px 0 5px; }
.split.dim .chev { color: #888; }
.tool { display: flex; align-items: center; justify-content: center; width: 37px; height: 36px; }
.tool.wide { width: 39px; }
.title {
  flex: 1;
  margin: 0;
  padding-right: 2px;
  font-size: 18px;
  line-height: 24px;
  font-weight: 400;
  text-align: center;
  white-space: nowrap;
}

.ctx-head {
  display: flex;
  align-items: center;
  justify-content: center;
  padding-top: 3px;
  border: solid #d2c27a;
  border-width: 0 1px;
  border-top: 4px solid #cfae18;
  background: #d3cdaf;
  font-size: 15px;
}

.winbar { justify-content: flex-end; }
.search {
  display: flex;
  align-items: center;
  gap: 3px;
  width: 228px;
  height: 33px;
  margin-right: 4px;
  padding-left: 2px;
  border: 2px solid #b3b3b3;
  border-radius: 5px;
  background: #fff;
}
.search input { width: 194px; outline: 0; }
.search input::placeholder { color: #8a8a8a; opacity: 1; }
.win { display: flex; align-items: center; justify-content: center; width: 62px; height: 36px; }

.tabs { display: flex; }
.tab { height: 38px; padding: 3px 14px 0; white-space: nowrap; }
.tab:last-child { padding-right: 12px; }
.tab.file {
  width: 83px;
  margin-right: 5px;
  border-radius: 5px 5px 0 0;
  background: #ad4a4a;
  color: #fff;
}
.tab.active {
  display: flex;
  flex-direction: column;
  align-items: center;
  justify-content: flex-end;
  gap: 3px;
  width: 77px;
  padding: 0 9px 1px;
  border-radius: 5px 5px 0 0;
  background: #f3f3f3;
  color: #153c66;
  box-shadow: 0 0 2px #888;
  clip-path: inset(-3px -3px 0 -3px);
}
.tab.active::after { content: ""; width: 100%; height: 3px; border-radius: 2px; background: #8aa3b7; }
.ctx-tab { padding: 3px 23px 0; border: solid #d2c27a; border-width: 0 1px; background: #d3cdaf; }

.finders { display: flex; justify-content: flex-end; align-items: center; padding: 0 4px 2px 0; }
.finder { display: flex; align-items: center; gap: 3px; margin-right: 6px; white-space: nowrap; }
.fold { padding: 0 0 0 16px; }
.chev-fold { width: 14px; height: 9px; color: #333; transform: rotate(180deg); }

/* Ribbon */
.ribbon {
  display: flex;
  height: 123px;
  background: #f3f3f3;
  box-shadow: inset 0 1px #b5b5b5;
  border-bottom: 1px solid #444;
}
.group { display: flex; flex-direction: column; border-right: 1px solid #c4c4c4; }
.body { display: flex; padding: 3px 0 0 1px; height: 101px; }
.name { font-size: 15px; line-height: 20px; text-align: center; color: #808080; }

.big {
  display: flex;
  flex-direction: column;
  align-items: center;
  gap: 3px;
  height: 95px;
  padding-top: 3px;
  line-height: 19px;
  text-align: center;
  white-space: nowrap;
}
.big > .chev { margin-top: 5px; }
.big span .chev { display: inline-block; margin-left: 4px; }
.big.on { padding-top: 2px; border: 1px solid #b3ab93; border-radius: 2px; background: #e4d09f; }
.w54 { width: 54px; }
.w56 { width: 56px; }
.w60 { width: 60px; }
.w76 { width: 76px; }
.w93 { width: 93px; }

.stack { display: flex; flex-direction: column; }
.row { display: flex; align-items: center; gap: 5px; height: 31px; padding-left: 3px; white-space: nowrap; }
.row .chev { margin-left: 2px; }
.corner { width: 4px; height: 4px; align-self: flex-end; margin: 0 0 5px -3px; }
.line { display: flex; align-items: center; height: 31px; }
.ib { display: flex; align-items: center; justify-content: center; width: 31px; height: 31px; }
.vsep { width: 1px; height: 31px; margin: 0 2px; background: #c4c4c4; }

.combo {
  display: grid;
  align-items: center;
  width: 124px;
  height: 27px;
  margin: 0 2px 0 3px;
  border: 1px solid #a5a5a5;
  border-radius: 4px;
  background: #fff;
}
.combo select { grid-area: 1 / 1; width: 100%; height: 100%; padding-left: 4px; outline: 0; appearance: none; }
.combo svg { grid-area: 1 / 1; justify-self: end; margin-right: 4px; pointer-events: none; }

.g-tools { width: 334px; }
.g-view { width: 200px; }
.g-view .body { padding-left: 3px; }
.g-objects { width: 272px; }
.g-objects .body { padding-left: 2px; }
.g-comment { width: 347px; }
.g-comment .body { padding-left: 3px; }
.g-comment .vsep { height: 95px; margin: 0; }
.col-a { width: 147px; }
.col-b { width: 132px; }
.g-links { width: 298px; }
.g-links .body { padding-left: 4px; }
.g-protect { width: 97px; }
.g-protect .body { padding-left: 2px; }

/* Document tabs */
.doctabs {
  display: flex;
  height: 44px;
  padding-top: 1px;
  border-bottom: 3px solid #fbe3ab;
  background: linear-gradient(#787878, #909090);
}
.doctab {
  display: grid;
  grid-template-columns: 1fr auto;
  grid-template-rows: 1fr 3px;
  width: 261px;
  padding: 0 8px 2px;
  border-radius: 0 5px 0 0;
  background: #fbe6b5;
  font-size: 18px;
}
.doctab span { align-self: center; padding-top: 3px; white-space: nowrap; }
.doctab .x { align-self: start; padding-top: 7px; }
.doctab::after { content: ""; grid-column: 1 / 3; border-radius: 2px; background: #a39566; }
.newtab, .closeall {
  display: flex;
  align-items: center;
  justify-content: center;
  width: 35px;
  height: 35px;
  margin: 3px 0 0 2px;
  border-radius: 3px;
  background: #c6c6c6;
}
.closeall { width: 38px; height: 37px; margin: 1px 1px 0 auto; }

/* Work area */
.work {
  display: grid;
  grid-template-columns: 34px 1fr 23px;
  grid-template-rows: 1fr 23px 34px;
  min-height: 0;
}
.side { grid-row: 1 / 4; display: flex; flex-direction: column; align-items: center; background: #f3f3f3; }
.sidefold { display: flex; justify-content: flex-end; width: 100%; height: 13px; padding: 1px 1px 0 0; background: #e6e6e6; }
.grip, .dots { background: radial-gradient(circle at 1px 1px, #aaa 1px, transparent 1px) 0 0 / 3px 3px; }
.grip { width: 28px; height: 14px; margin: 1px 2px 0 0; }
.sb { display: flex; align-items: center; justify-content: center; width: 32px; height: 31px; margin-right: 2px; }
.hsep { width: 31px; height: 1px; margin: 2px 0; background: #c4c4c4; }

.page {
  overflow: hidden;
  border: 1px solid #777;
  background: #fff;
  box-shadow: inset 0 0 2px #999;
}
.drawing { width: 100%; height: 100%; overflow: hidden; }
.cad { font: 200px "Liberation Sans", Arial, sans-serif; stroke: #000; }
.one { font: 198px Roboto, sans-serif; }

/* Thumbs sit at the scrolled fraction of their tracks */
.vscroll, .hscroll { display: grid; background: #f0f0f0; }
.vscroll { grid-template-rows: 14px 59fr 24px 41fr 14px; justify-items: center; padding: 5px 0; }
.hscroll { grid-column: 2 / 4; grid-template-columns: 14px 312fr 71px 688fr 14px; align-items: center; padding: 0 28px 0 5px; }
.vthumb { grid-row: 3; width: 8px; border-radius: 3px; background: #7f7f7f; }
.hthumb { grid-column: 3; height: 8px; border-radius: 4px; background: #7f7f7f; }
.up { grid-row: 1; transform: rotate(90deg); }
.down { grid-row: 5; transform: rotate(-90deg); }
.right { grid-column: 5; transform: rotate(180deg); }

/* Status bar */
.status { grid-column: 2 / 4; display: flex; background: #f3f3f3; }
.bar { display: flex; align-items: center; padding-top: 1px; }
.bar.lead { flex: 0 0 764px; }
.bar.trail { margin-left: auto; }
.handle { display: flex; flex-direction: column; gap: 5px; width: 15px; margin: 0 1px; }
.dots { width: 13px; height: 15px; }
.handle svg { margin-left: 3px; }
.opts { display: flex; align-items: center; gap: 6px; padding-left: 2px; }
.ssep { width: 1px; height: 31px; margin: 0 2px; background: #c4c4c4; }
.opts + .ssep { margin: 0 2px 0 4px; }
.readout { margin-left: 2px; }
.dims { margin: 0 2px 0 3px; font-size: 12px; line-height: 13px; white-space: nowrap; }
.pageno {
  display: flex;
  align-items: center;
  gap: 1px;
  width: 132px;
  height: 27px;
  margin: 0 2px;
  padding-right: 4px;
  border: 1px solid #bbb;
  border-radius: 4px;
  background: #fbfbfb;
  color: #777;
}
.pageno input { width: 106px; text-align: right; outline: 0; }
.slash { width: 10px; height: 20px; }
.total { padding-bottom: 3px; font-size: 14px; line-height: 16px; }
.ib.on { border: 1px solid #b3ab93; border-radius: 2px; background: #e4d09f; }
.combo.small { width: 90px; margin: 0 2px 0 1px; }
.zoom {
  appearance: none;
  width: 150px;
  height: 24px;
  margin: 0 3px;
  background:
    linear-gradient(#888, #888) 75px 4px / 1px 3px no-repeat,
    linear-gradient(#888, #888) 75px 17px / 1px 3px no-repeat,
    linear-gradient(90deg, #8a8a8a 72%, #bdbdbd 72%) 0 11px / 100% 2px no-repeat;
}
.zoom::-webkit-slider-thumb {
  appearance: none;
  width: 24px;
  height: 24px;
  border: 1px solid #777;
  border-radius: 50%;
  background: radial-gradient(circle, #888 5px, #f8f8f8 6px);
}
.pdfbtn { padding-left: 4px; }
.more { display: flex; justify-content: center; width: 13px; height: 34px; margin-left: 1px; padding-top: 4px; background: #e2e2e2; }
```
